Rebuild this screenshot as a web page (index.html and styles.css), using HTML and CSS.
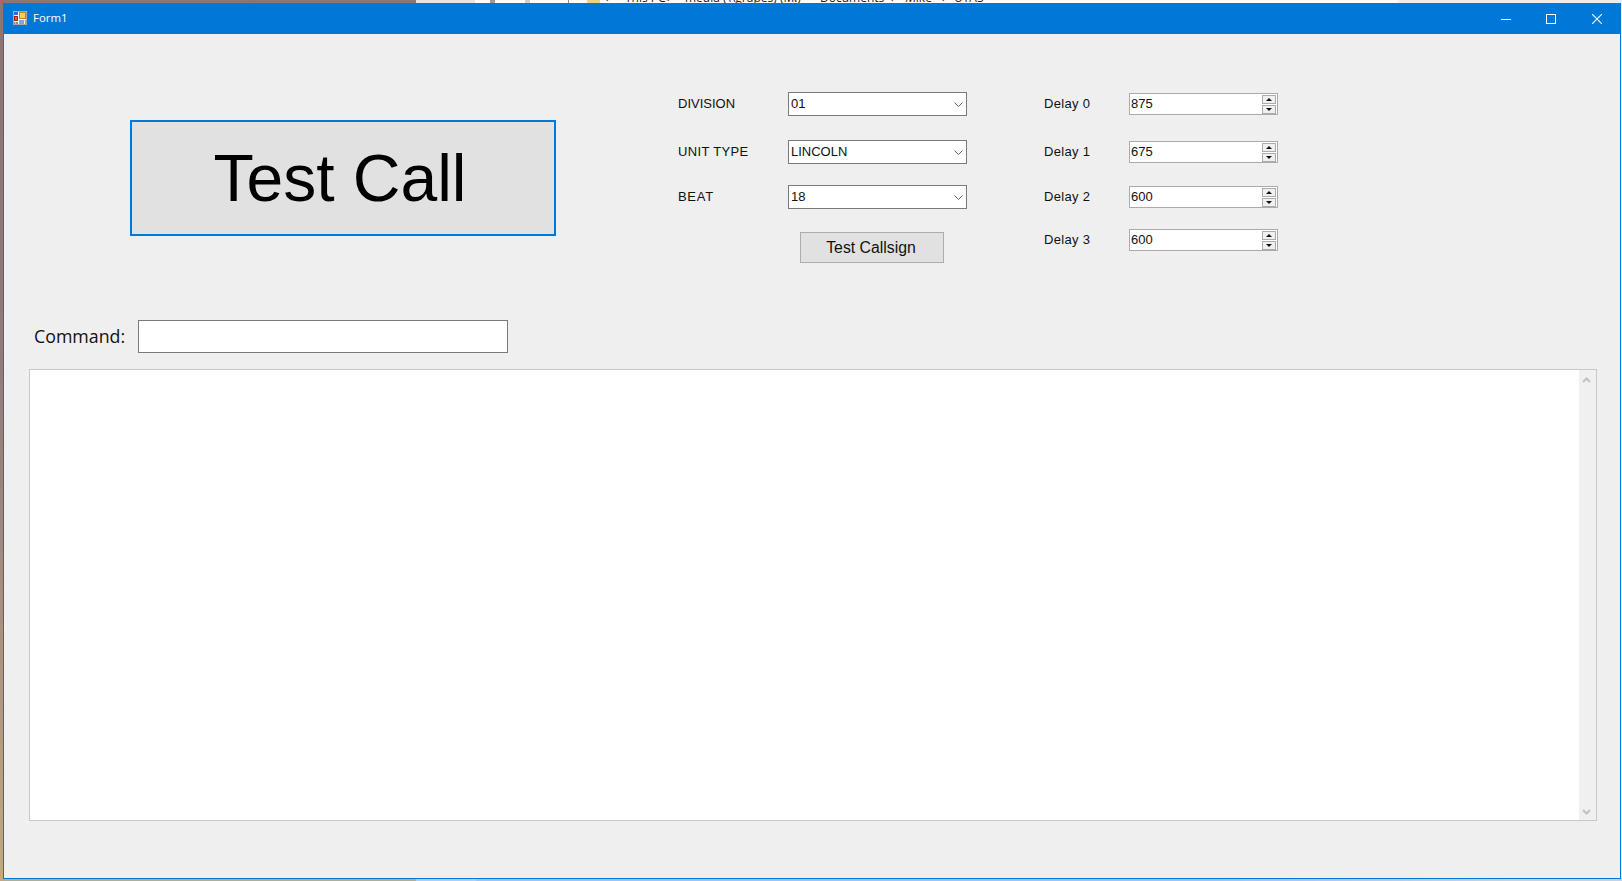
FILE: index.html
```html
<!DOCTYPE html>
<html lang="en">
<head>
<meta charset="utf-8">
<title>Form1</title>
<link rel="stylesheet" href="styles.css">
</head>
<body>
<div class="wallpaper"></div>
<div class="explorer">
  <i class="nav-arrow nav-back"></i>
  <i class="nav-arrow nav-forward"></i>
  <i class="nav-sep"></i>
  <i class="nav-folder"></i>
  <div class="crumbs">
    <span class="arrow a1">&#8250;</span><span class="crumb c1">This PC</span>
    <span class="arrow a2">&#8250;</span><span class="crumb c2">media (\\grapes) (M:)</span>
    <span class="arrow a3">&#8250;</span><span class="crumb c3">Documents</span>
    <span class="arrow a4">&#8250;</span><span class="crumb c4">Mike</span>
    <span class="arrow a5">&#8250;</span><span class="crumb">UTAS</span>
  </div>
</div>

<div class="window">
  <header class="titlebar">
    <svg class="app-icon" width="14" height="14" viewBox="0 0 14 14" aria-hidden="true">
      <rect x="0.5" y="0.5" width="13" height="13" fill="#f4f4f4" stroke="#a9a9a9"/>
      <rect x="1" y="1" width="4" height="3" fill="#2f6fc4"/>
      <rect x="6" y="1" width="7" height="7" fill="#b98a14"/>
      <rect x="7" y="2" width="5" height="5" fill="#f7cf55"/>
      <rect x="1" y="5" width="4" height="5" fill="#b11f14"/>
      <rect x="2" y="6" width="2" height="3" fill="#e0584a"/>
      <rect x="6" y="9" width="5" height="4" fill="#7ea6e0"/>
      <rect x="12" y="9" width="1" height="4" fill="#8aa0c0"/>
      <rect x="1" y="11" width="1.5" height="2" fill="#8a8a8a"/>
      <rect x="3" y="11" width="2" height="2" fill="#8a8a8a"/>
    </svg>
    <span class="title-text">Form1</span>
    <div class="caption-buttons">
      <span class="caption-btn caption-min"><svg width="10" height="10" viewBox="0 0 10 10"><path d="M0 5.5H10" stroke="#fff" fill="none"/></svg></span>
      <span class="caption-btn"><svg width="10" height="10" viewBox="0 0 10 10"><rect x="0.5" y="0.5" width="9" height="9" stroke="#fff" fill="none"/></svg></span>
      <span class="caption-btn"><svg width="10" height="10" viewBox="0 0 10 10"><path d="M0 0L10 10M10 0L0 10" stroke="#fff" stroke-width="1.1" fill="none"/></svg></span>
    </div>
  </header>

  <main class="client">
    <section class="top">
      <button class="test-call" type="button">Test Call</button>

      <div class="combos">
        <div class="field-row">
          <span class="field-label">DIVISION</span>
          <div class="combo"><span>01</span><svg class="chev" width="9" height="5" viewBox="0 0 9 5"><path d="M0.5 0.5L4.5 4.5L8.5 0.5" stroke="#606060" fill="none"/></svg></div>
        </div>
        <div class="field-row">
          <span class="field-label label-unit">UNIT TYPE</span>
          <div class="combo"><span>LINCOLN</span><svg class="chev" width="9" height="5" viewBox="0 0 9 5"><path d="M0.5 0.5L4.5 4.5L8.5 0.5" stroke="#606060" fill="none"/></svg></div>
        </div>
        <div class="field-row field-row-tight">
          <span class="field-label label-beat">BEAT</span>
          <div class="combo"><span>18</span><svg class="chev" width="9" height="5" viewBox="0 0 9 5"><path d="M0.5 0.5L4.5 4.5L8.5 0.5" stroke="#606060" fill="none"/></svg></div>
        </div>
        <button class="test-callsign" type="button">Test Callsign</button>
      </div>

      <div class="delays">
        <div class="delay-row">
          <span class="delay-label">Delay 0</span>
          <div class="spinner"><span>875</span><div class="spin"><span class="spin-btn"><i class="tri-up"></i></span><span class="spin-btn"><i class="tri-down"></i></span></div></div>
        </div>
        <div class="delay-row delay-row-1">
          <span class="delay-label">Delay 1</span>
          <div class="spinner"><span>675</span><div class="spin"><span class="spin-btn"><i class="tri-up"></i></span><span class="spin-btn"><i class="tri-down"></i></span></div></div>
        </div>
        <div class="delay-row delay-row-2">
          <span class="delay-label">Delay 2</span>
          <div class="spinner"><span>600</span><div class="spin"><span class="spin-btn"><i class="tri-up"></i></span><span class="spin-btn"><i class="tri-down"></i></span></div></div>
        </div>
        <div class="delay-row delay-row-3">
          <span class="delay-label">Delay 3</span>
          <div class="spinner"><span>600</span><div class="spin"><span class="spin-btn"><i class="tri-up"></i></span><span class="spin-btn"><i class="tri-down"></i></span></div></div>
        </div>
      </div>
    </section>

    <section class="command">
      <label class="command-label" for="cmd">Command:</label>
      <input class="command-input" id="cmd" type="text">
    </section>

    <section class="log">
      <div class="log-body"></div>
      <div class="log-scroll">
        <svg width="9" height="6" viewBox="0 0 9 6"><path d="M1 5L4.5 1.5L8 5" stroke="#c2c2c2" stroke-width="2" fill="none"/></svg>
        <svg width="9" height="6" viewBox="0 0 9 6"><path d="M1 1L4.5 4.5L8 1" stroke="#c2c2c2" stroke-width="2" fill="none"/></svg>
      </div>
    </section>
  </main>
</div>
</body>
</html>
```

FILE: styles.css
```css
html, body {
  margin: 0;
  height: 100%;
  overflow: hidden;
}

body {
  position: relative;
  width: 1622px;
  height: 881px;
  background: #d9d9d9;
  font-family: "Liberation Sans", Arial, sans-serif;
  font-size: 13px;
  color: #000;
}

/* Desktop behind the form */
.wallpaper {
  position: absolute;
  left: 0;
  top: 0;
  width: 416px;
  height: 881px;
  background: linear-gradient(180deg, #8d7378 0%, #8f7a80 40%, #a89080 70%, #c4a97f 100%);
}

.explorer {
  position: absolute;
  left: 416px;
  top: 0;
  width: 1206px;
  height: 881px;
  overflow: hidden;
  background: linear-gradient(90deg, #e4e4e4 0, #e4e4e4 59px, #fff 59px, #fff 980px, #ececec 984px, #ececec 100%);
}

.explorer::after {
  content: "";
  position: absolute;
  left: 0;
  bottom: 0;
  width: 100%;
  height: 3px;
  background: linear-gradient(90deg, #b6cdea 0, #b6cdea 60px, #a8c2e4 60px, #a8c2e4 800px, #d0d0d0 1100px);
}

.nav-arrow {
  position: absolute;
  top: 0;
  width: 5px;
  height: 3px;
  background: #9a9a9a;
}

.nav-back { left: 74px; }
.nav-forward { left: 109px; background: #cfcfcf; }

.nav-sep {
  position: absolute;
  left: 152px;
  top: 0;
  width: 1px;
  height: 3px;
  background: #8c8c8c;
}

.nav-folder {
  position: absolute;
  left: 171px;
  top: 0;
  width: 13px;
  height: 3px;
  background: #f3d27c;
}

.crumbs {
  position: absolute;
  left: 190px;
  top: -10px;
  display: flex;
  align-items: center;
  height: 14px;
  white-space: nowrap;
  font-family: "Open Sans", sans-serif;
  font-size: 12px;
  color: #222;
}

.arrow { flex: none; }
.crumb { flex: none; }

.a1 { width: 19px; }
.c1 { width: 42px; }
.a2 { width: 18px; }
.c2 { width: 109px; }
.a3 { width: 26px; }
.c3 { width: 71px; }
.a4 { width: 14px; }
.c4 { width: 37px; }
.a5 { width: 12px; }

/* Form window */
.window {
  position: absolute;
  left: 3px;
  top: 3px;
  box-sizing: border-box;
  width: 1618px;
  height: 876px;
  display: flex;
  flex-direction: column;
  border: 1px solid #0078d7;
  background: #f0f0f0;
}

.titlebar {
  box-sizing: border-box;
  flex: 0 0 30px;
  display: flex;
  align-items: flex-start;
  background: #0078d7;
  color: #fff;
  padding: 7px 0 0 9px;
}

.app-icon {
  flex: none;
}

.title-text {
  margin-left: 6px;
  font-family: "Open Sans", sans-serif;
  font-size: 11.4px;
  line-height: 14px;
}

.caption-buttons {
  margin: -7px 0 0 auto;
  display: flex;
}

.caption-btn {
  width: 46px;
  height: 30px;
  display: flex;
  align-items: center;
  justify-content: center;
}

.caption-min {
  padding-left: 2px;
  box-sizing: border-box;
}

.client {
  flex: 1;
  display: flex;
  flex-direction: column;
  background: #efefef;
}

.top {
  display: flex;
  align-items: flex-start;
  padding: 58px 0 0 126px;
}

.test-call {
  box-sizing: border-box;
  flex: none;
  width: 426px;
  height: 116px;
  margin: 28px 0 0;
  padding: 0 6px 0 0;
  border: 2px solid #0078d7;
  border-radius: 0;
  background: #e1e1e1;
  color: #000;
  font-family: "Liberation Sans", Arial, sans-serif;
  font-size: 66px;
}

.combos {
  flex: none;
  width: 289px;
  margin-left: 122px;
  display: flex;
  flex-direction: column;
}

.field-row {
  display: flex;
  align-items: center;
  height: 24px;
  margin-bottom: 24px;
  color: #111;
}

.field-row:nth-child(2) {
  margin-bottom: 21px;
}

.field-row-tight {
  margin-bottom: 23px;
}

.field-label {
  flex: 0 0 110px;
  position: relative;
  top: -1px;
}

.label-unit { letter-spacing: 0.35px; }
.label-beat { letter-spacing: 0.7px; }

.combo {
  box-sizing: border-box;
  flex: none;
  width: 179px;
  height: 24px;
  display: flex;
  align-items: center;
  justify-content: space-between;
  padding: 0 3px 2px 2px;
  background: #fff;
  border: 1px solid #7a7a7a;
  color: #111;
}

.chev {
  margin: 3px 0 0;
}

.test-callsign {
  box-sizing: border-box;
  width: 144px;
  height: 31px;
  margin: 0 0 0 122px;
  padding: 0 2px 0 0;
  border: 1px solid #adadad;
  border-radius: 0;
  background: #e1e1e1;
  color: #111;
  font-family: "Liberation Sans", Arial, sans-serif;
  font-size: 15.8px;
}

.delays {
  flex: none;
  margin: 1px 0 0 77px;
  display: flex;
  flex-direction: column;
}

.delay-row {
  display: flex;
  align-items: center;
  height: 22px;
}

.delay-row-1 { margin-top: 26px; }
.delay-row-2 { margin-top: 23px; }
.delay-row-3 { margin-top: 21px; }

.delay-label {
  flex: 0 0 85px;
  letter-spacing: 0.3px;
  color: #111;
  padding-bottom: 2px;
}

.spinner {
  box-sizing: border-box;
  flex: none;
  width: 149px;
  height: 22px;
  display: flex;
  align-items: center;
  justify-content: space-between;
  padding-left: 1px;
  background: #fff;
  border: 1px solid #ababab;
  color: #111;
}

.spinner > span {
  position: relative;
  top: -1px;
}

.spin {
  display: flex;
  flex-direction: column;
  gap: 1px;
  margin-right: 1px;
}

.spin-btn {
  box-sizing: border-box;
  width: 14px;
  height: 9px;
  display: flex;
  align-items: center;
  justify-content: center;
  background: #f0f0f0;
  border: 1px solid #acacac;
}

.tri-up,
.tri-down {
  display: block;
  width: 0;
  height: 0;
  border-left: 3px solid transparent;
  border-right: 3px solid transparent;
}

.tri-up { border-bottom: 3px solid #111; }
.tri-down { border-top: 3px solid #111; }

.command {
  display: flex;
  align-items: center;
  height: 33px;
  margin-top: 57px;
  padding-left: 30px;
}

.command-label {
  flex: 0 0 104px;
  position: relative;
  top: -1px;
  font-family: "Open Sans", sans-serif;
  font-size: 17.8px;
  color: #111;
}

.command-input {
  box-sizing: border-box;
  flex: none;
  width: 370px;
  height: 33px;
  margin: 0;
  padding: 0;
  background: #fff;
  border: 1px solid #7a7a7a;
  border-radius: 0;
  outline: none;
}

.log {
  box-sizing: border-box;
  display: flex;
  width: 1568px;
  height: 452px;
  margin: 16px 0 0 25px;
  border: 1px solid #c8c8c8;
  background: #fff;
}

.log-body {
  flex: 1;
}

.log-scroll {
  box-sizing: border-box;
  flex: 0 0 17px;
  height: 450px;
  display: flex;
  flex-direction: column;
  align-items: center;
  justify-content: space-between;
  padding: 7px 2px 5px 0;
  background: #f0f0f0;
}
```
